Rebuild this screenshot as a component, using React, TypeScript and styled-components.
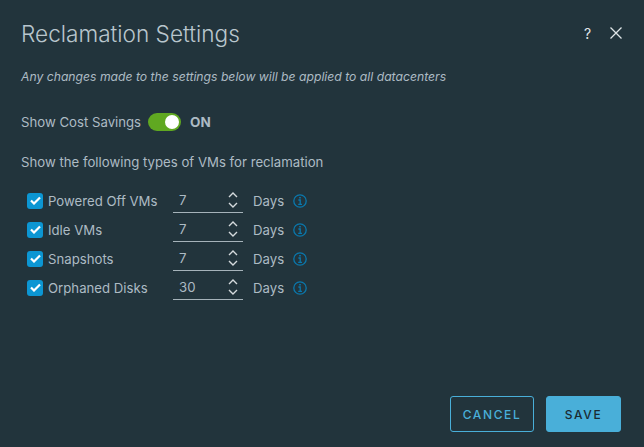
import React from "react";
import styled, { createGlobalStyle } from "styled-components";

const Global = createGlobalStyle`
  html, body { margin: 0; padding: 0; background: #22343c; }
  * { box-sizing: border-box; }
`;

const Modal = styled.div`
  width: 644px;
  height: 447px;
  background: #22343c;
  font-family: Inter, "Liberation Sans", sans-serif;
  color: #adbbc4;
  display: flex;
  flex-direction: column;
  padding: 0 23px 15px 21px;
`;

const Header = styled.header`
  display: flex;
  align-items: center;
  justify-content: space-between;
  height: 66px;
`;

const Title = styled.h1`
  margin: 0;
  font-size: 22.6px;
  font-weight: 300;
  color: #b9c6cd;
`;

const HeaderIcons = styled.div`
  display: flex;
  align-items: center;
  gap: 16px;
  margin-right: -1px;
`;

const Help = styled.span`
  font-size: 14px;
  font-weight: 400;
  color: #e3e7e9;
  width: 10px;
`;

const Note = styled.p`
  margin: 4px 0 0;
  font-size: 12.2px;
  font-style: italic;
  font-weight: 400;
  line-height: 14px;
  color: #adbbc4;
`;

const ToggleRow = styled.div`
  display: flex;
  align-items: center;
  margin-top: 28px;
  height: 20px;
`;

const Text = styled.span`
  font-size: 13.2px;
  line-height: 16px;
  color: #adbbc4;
`;

const Track = styled.span`
  width: 33px;
  height: 18px;
  margin-left: 7px;
  border-radius: 9px;
  background: #60a821;
  display: flex;
  justify-content: flex-end;
  padding: 2px;
`;

const Knob = styled.span`
  width: 14px;
  height: 14px;
  border-radius: 50%;
  background: #fff;
`;

const OnLabel = styled.span`
  margin-left: 9px;
  font-size: 13.5px;
  font-weight: 700;
  color: #adbbc4;
`;

const Subheading = styled(Text)`
  display: block;
  margin-top: 22px;
`;

const List = styled.div`
  display: flex;
  flex-direction: column;
  margin: 16px 0 0 6px;
`;

const Row = styled.div`
  display: flex;
  align-items: center;
  height: 29px;
`;

const Check = styled.span`
  width: 16px;
  height: 16px;
  border-radius: 3px;
  background: #0c96d3;
  display: flex;
  align-items: center;
  justify-content: center;
`;

const RowLabel = styled(Text)`
  width: 125px;
  margin-left: 5px;
`;

const Stepper = styled.div`
  width: 70px;
  height: 25px;
  border-bottom: 1px solid #a6b3ba;
  display: flex;
  align-items: center;
  justify-content: space-between;
  padding: 0 5px 0 6px;
  font-size: 13.2px;
  color: #adbbc4;
`;

const Chevrons = styled.svg`
  display: block;
`;

const Days = styled(Text)`
  margin-left: 10px;
`;

const Info = styled.svg`
  margin-left: 9px;
`;

const Footer = styled.footer`
  margin-top: auto;
  display: flex;
  justify-content: flex-end;
  gap: 12px;
`;

const Button = styled.button<{ $primary?: boolean }>`
  height: 36px;
  width: ${(p) => (p.$primary ? "75px" : "84px")};
  border-radius: 3px;
  border: 1px solid #49afd9;
  background: ${(p) => (p.$primary ? "#49afd9" : "transparent")};
  color: ${(p) => (p.$primary ? "#1b2a32" : "#49afd9")};
  font-family: inherit;
  font-size: 12px;
  font-weight: 500;
  letter-spacing: 1.6px;
  padding: 0;
`;

const rows = [
  { label: "Powered Off VMs", days: 7 },
  { label: "Idle VMs", days: 7 },
  { label: "Snapshots", days: 7 },
  { label: "Orphaned Disks", days: 30 },
];

export default function App() {
  return (
    <Modal>
      <Global />
      <Header>
        <Title>Reclamation Settings</Title>
        <HeaderIcons>
          <Help>?</Help>
          <svg width="12" height="12" viewBox="0 0 12 12" fill="none" stroke="#dfe4e7" strokeWidth="1.3">
            <path d="M.5.5l11 11M11.5.5l-11 11" />
          </svg>
        </HeaderIcons>
      </Header>
      <Note>Any changes made to the settings below will be applied to all datacenters</Note>
      <ToggleRow>
        <Text>Show Cost Savings</Text>
        <Track><Knob /></Track>
        <OnLabel>ON</OnLabel>
      </ToggleRow>
      <Subheading>Show the following types of VMs for reclamation</Subheading>
      <List>
        {rows.map((r) => (
          <Row key={r.label}>
            <Check>
              <svg width="11" height="9" viewBox="0 0 11 9" fill="none" stroke="#fff" strokeWidth="2.2">
                <path d="M1 4.5l3 3 6-6" />
              </svg>
            </Check>
            <RowLabel>{r.label}</RowLabel>
            <Stepper>
              {r.days}
              <Chevrons width="10" height="16" viewBox="0 0 10 16" fill="none" stroke="#d5dadd" strokeWidth="1.4">
                <path d="M1 5l4-4 4 4M1 11l4 4 4-4" />
              </Chevrons>
            </Stepper>
            <Days>Days</Days>
            <Info width="14" height="14" viewBox="0 0 14 14" fill="none" stroke="#0a78ad" strokeWidth="1.3">
              <circle cx="7" cy="7" r="6.2" />
              <path d="M5.4 6h1.8v4.3M5.2 10.4h3.8" />
              <path d="M6.2 3.1h1.6v1.5H6.2z" fill="#0a78ad" stroke="none" />
            </Info>
          </Row>
        ))}
      </List>
      <Footer>
        <Button>CANCEL</Button>
        <Button $primary>SAVE</Button>
      </Footer>
    </Modal>
  );
}
